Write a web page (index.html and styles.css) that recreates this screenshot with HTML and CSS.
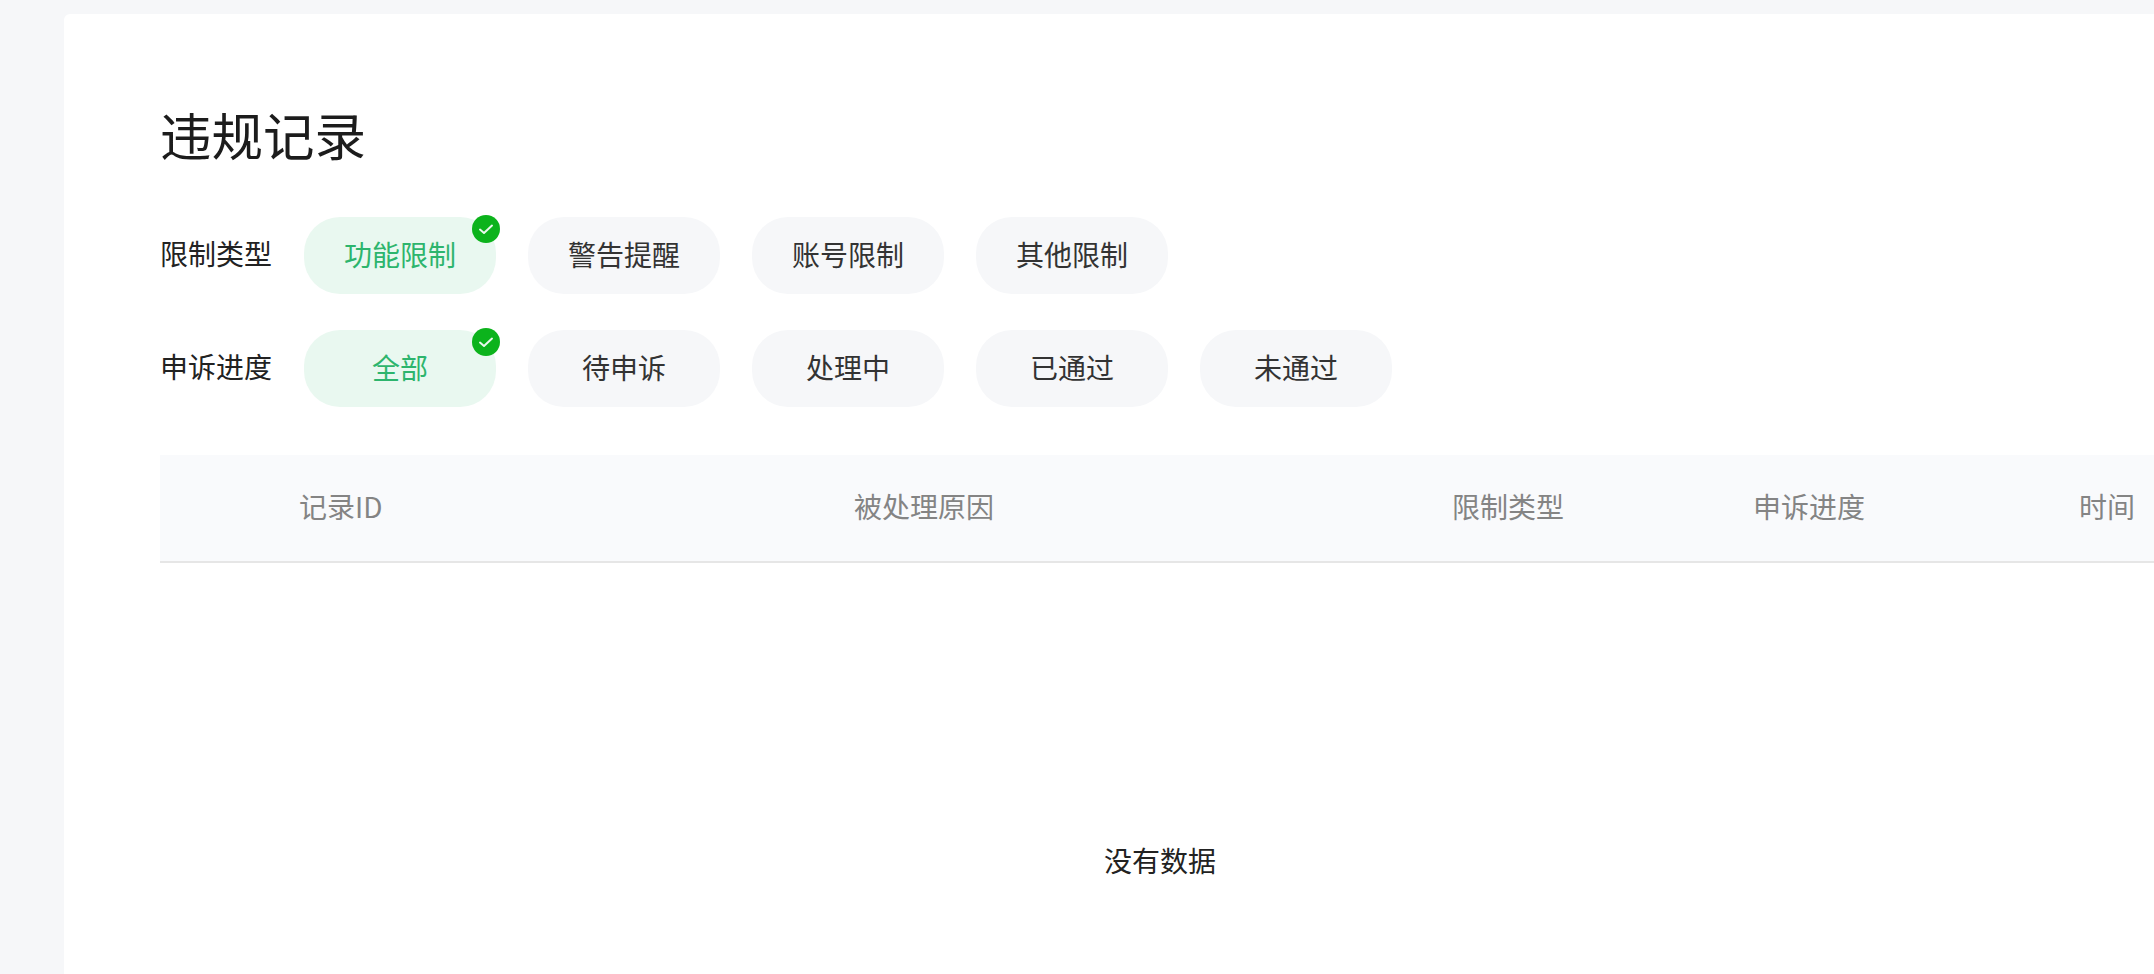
FILE: index.html
```html
<!DOCTYPE html>
<html lang="zh-CN">
<head>
<meta charset="utf-8">
<title>违规记录</title>
<link rel="stylesheet" href="styles.css">
</head>
<body>
<main class="card">
  <h1 class="title">违规记录</h1>
  <div class="filter">
    <span class="filter-label">限制类型</span>
    <div class="pills">
      <button class="pill is-active">功能限制<svg class="check" viewBox="0 0 28 28"><circle cx="14" cy="14" r="14" fill="#0cb31c"/><path d="M8 14.6l4 3.4 8-7.4" fill="none" stroke="#e9f8ec" stroke-width="2" stroke-linecap="round" stroke-linejoin="round"/></svg></button>
      <button class="pill">警告提醒</button>
      <button class="pill">账号限制</button>
      <button class="pill">其他限制</button>
    </div>
  </div>
  <div class="filter">
    <span class="filter-label">申诉进度</span>
    <div class="pills">
      <button class="pill is-active">全部<svg class="check" viewBox="0 0 28 28"><circle cx="14" cy="14" r="14" fill="#0cb31c"/><path d="M8 14.6l4 3.4 8-7.4" fill="none" stroke="#e9f8ec" stroke-width="2" stroke-linecap="round" stroke-linejoin="round"/></svg></button>
      <button class="pill">待申诉</button>
      <button class="pill">处理中</button>
      <button class="pill">已通过</button>
      <button class="pill">未通过</button>
    </div>
  </div>
  <section class="table">
    <div class="table-head">
      <span>记录ID</span>
      <span>被处理原因</span>
      <span>限制类型</span>
      <span>申诉进度</span>
      <span>时间</span>
    </div>
    <div class="table-empty">没有数据</div>
  </section>
</main>
</body>
</html>
```
FILE: styles.css
```css
* { box-sizing: border-box; }
html, body { height: 100%; }
body {
  margin: 0;
  overflow: hidden;
  background: #f6f7f9;
  font-family: "Noto Sans CJK SC", "Liberation Sans", sans-serif;
  color: #222;
  padding: 14px 0 0 64px;
}
.card {
  width: 2090px;
  height: 960px;
  background: #fff;
  border-radius: 6px 0 0 0;
  padding: 87px 0 0 96px;
}
.title {
  margin: 0 0 50px;
  width: 204px;
  font-size: 51.5px;
  font-weight: 400;
  line-height: 66px;
  white-space: nowrap;
  color: #1c1c1c;
}
.filter {
  display: flex;
  align-items: center;
  margin-bottom: 36px;
  height: 77px;
}
.filter-label {
  width: 144px;
  padding-bottom: 5px;
  font-size: 28px;
  line-height: 40px;
}
.pills { display: flex; gap: 32px; }
.pill {
  position: relative;
  width: 192px;
  height: 77px;
  padding: 0 0 4px;
  border: 0;
  border-radius: 36px;
  background: #f6f7f9;
  font: inherit;
  font-size: 28px;
  color: #333;
}
.pill.is-active {
  background: #e9f8f0;
  color: #2db56d;
}
.check {
  position: absolute;
  top: -2px;
  right: -4px;
  width: 28px;
  height: 28px;
}
.table { width: 1994px; margin-top: 48px; }
.table-head {
  display: grid;
  grid-template-columns: 555px 598px 301px 326px 1fr;
  align-items: center;
  height: 108px;
  padding: 0 0 4px 139px;
  background: #f9fafc;
  border-bottom: 2px solid #e6e6e6;
  font-size: 28px;
  color: #848484;
  white-space: nowrap;
}
.table-empty {
  width: 2000px;
  padding-top: 277px;
  text-align: center;
  font-size: 28px;
  line-height: 40px;
  color: #222;
}
```
